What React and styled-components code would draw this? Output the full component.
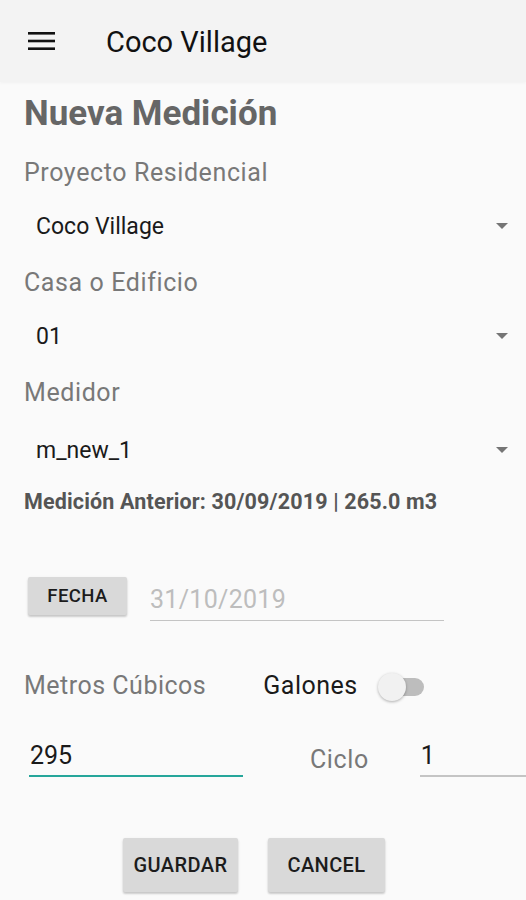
import React from "react";
import styled, { createGlobalStyle } from "styled-components";

const Global = createGlobalStyle`
  html, body { margin: 0; padding: 0; background: #fafafa; }
  body { font-family: Roboto, "Noto Sans", "Liberation Sans", sans-serif; -webkit-font-smoothing: antialiased; }
  * { box-sizing: border-box; }
`;

const Page = styled.div`
  width: 526px;
  height: 900px;
  overflow: hidden;
  background: #fafafa;
`;

const AppBar = styled.header`
  height: 82px;
  display: flex;
  align-items: center;
  padding-left: 28px;
  background: #f3f3f3;
  box-shadow: 0 1px 3px rgba(0, 0, 0, 0.04);
  position: relative;
`;

const MenuIcon = styled.svg`
  width: 27px;
  height: 18px;
  display: block;
`;

const AppTitle = styled.h1`
  margin: 0 0 0 51px;
  padding-top: 2px;
  font-size: 29px;
  font-weight: 400;
  color: #111;
  line-height: 82px;
`;

const Content = styled.main`
  display: flex;
  flex-direction: column;
`;

const Heading = styled.h2`
  margin: 10px 0 0 24px;
  font-size: 35px;
  line-height: 44px;
  font-weight: 700;
  color: #666;
`;

const Label = styled.div`
  margin: ${(p) => p.$top}px 0 0 24px;
  font-size: 25px;
  line-height: 34px;
  letter-spacing: 0.6px;
  color: #787878;
`;

const Spinner = styled.div`
  margin-top: ${(p) => p.$top}px;
  height: 40px;
  display: flex;
  align-items: center;
  justify-content: space-between;
  padding: 0 18px 0 36px;
`;

const SpinnerValue = styled.span`
  font-size: 23px;
  line-height: 40px;
  color: #1a1a1a;
`;

const Arrow = styled.span`
  width: 0;
  height: 0;
  border-left: 6px solid transparent;
  border-right: 6px solid transparent;
  border-top: 6px solid #757575;
  margin-top: -3px;
`;

const Note = styled.div`
  margin: 16px 0 0 24px;
  font-size: 21.5px;
  line-height: 30px;
  font-weight: 700;
  letter-spacing: 0.15px;
  color: #555;
`;

const DateRow = styled.div`
  margin-top: 60px;
  display: flex;
  align-items: flex-start;
  padding-left: 28px;
`;

const RaisedButton = styled.button`
  flex-shrink: 0;
  width: ${(p) => p.$w}px;
  height: ${(p) => p.$h}px;
  border: none;
  border-radius: 2px;
  background: #d9d9d9;
  box-shadow: 0 2px 2px rgba(0, 0, 0, 0.14), 0 1px 3px rgba(0, 0, 0, 0.1);
  font-family: Roboto, "Liberation Sans", sans-serif;
  font-weight: 500;
  font-size: ${(p) => p.$fs}px;
  color: #1c1c1c;
  letter-spacing: 0.4px;
  padding: 0;
  display: flex;
  align-items: center;
  justify-content: center;
`;

const DateField = styled.div`
  margin: 3px 0 0 23px;
  width: 294px;
  font-size: 25px;
  line-height: 40px;
  letter-spacing: 0.3px;
  color: #bdbdbd;
  border-bottom: 1.5px solid #c4c4c4;
`;

const UnitRow = styled.div`
  margin-top: 48px;
  display: flex;
  align-items: center;
  padding-left: 24px;
  height: 34px;
`;

const UnitLabel = styled.span`
  flex-shrink: 0;
  font-size: 25px;
  line-height: 34px;
  letter-spacing: 0.5px;
  color: ${(p) => (p.$dark ? "#1a1a1a" : "#787878")};
  margin-left: ${(p) => p.$ml || 0}px;
`;

const Switch = styled.span`
  position: relative;
  flex-shrink: 0;
  margin-left: 23px;
  width: 43px;
  height: 18px;
  margin-top: 2px;
  border-radius: 9px;
  background: #bdbdbd;
`;

const Thumb = styled.span`
  position: absolute;
  left: -3px;
  top: -5px;
  width: 28px;
  height: 28px;
  border-radius: 50%;
  background: #f1f1f1;
  box-shadow: 0 1px 3px rgba(0, 0, 0, 0.3);
`;

const InputRow = styled.div`
  margin-top: 36px;
  display: flex;
  align-items: flex-start;
  padding-left: 29px;
`;

const Input = styled.div`
  flex-shrink: 0;
  width: ${(p) => p.$w}px;
  font-size: 25px;
  line-height: 34px;
  color: #1a1a1a;
  padding: 0 0 1.5px 1px;
  border-bottom: ${(p) => (p.$active ? "2.5px solid #26a69a" : "2px solid #c4c4c4")};
  margin-left: ${(p) => p.$ml || 0}px;
`;

const InlineLabel = styled.span`
  flex-shrink: 0;
  margin: 4px 0 0 67px;
  font-size: 25px;
  line-height: 34px;
  letter-spacing: 0.6px;
  color: #787878;
`;

const ButtonRow = styled.div`
  margin-top: 61px;
  display: flex;
  gap: 30px;
  padding-left: 123px;
`;

export default function App() {
  return (
    <Page>
      <Global />
      <AppBar>
        <MenuIcon viewBox="0 0 27 18">
          <rect x="0" y="0" width="27" height="2.6" fill="#111" />
          <rect x="0" y="7.7" width="27" height="2.6" fill="#111" />
          <rect x="0" y="15.4" width="27" height="2.6" fill="#111" />
        </MenuIcon>
        <AppTitle>Coco Village</AppTitle>
      </AppBar>
      <Content>
        <Heading>Nueva Medición</Heading>
        <Label $top={20}>Proyecto Residencial</Label>
        <Spinner $top={17}>
          <SpinnerValue>Coco Village</SpinnerValue>
          <Arrow />
        </Spinner>
        <Label $top={19}>Casa o Edificio</Label>
        <Spinner $top={17}>
          <SpinnerValue>01</SpinnerValue>
          <Arrow />
        </Spinner>
        <Label $top={19}>Medidor</Label>
        <Spinner $top={21}>
          <SpinnerValue>m_new_1</SpinnerValue>
          <Arrow />
        </Spinner>
        <Note>Medición Anterior: 30/09/2019 | 265.0 m3</Note>
        <DateRow>
          <RaisedButton $w={99} $h={38} $fs={18.5}>FECHA</RaisedButton>
          <DateField>31/10/2019</DateField>
        </DateRow>
        <UnitRow>
          <UnitLabel>Metros Cúbicos</UnitLabel>
          <UnitLabel $dark $ml={57}>Galones</UnitLabel>
          <Switch>
            <Thumb />
          </Switch>
        </UnitRow>
        <InputRow>
          <Input $w={214} $active>295</Input>
          <InlineLabel>Ciclo</InlineLabel>
          <Input $w={106} $ml={51}>1</Input>
        </InputRow>
        <ButtonRow>
          <RaisedButton $w={115} $h={54} $fs={20}>GUARDAR</RaisedButton>
          <RaisedButton $w={117} $h={54} $fs={20}>CANCEL</RaisedButton>
        </ButtonRow>
      </Content>
    </Page>
  );
}
